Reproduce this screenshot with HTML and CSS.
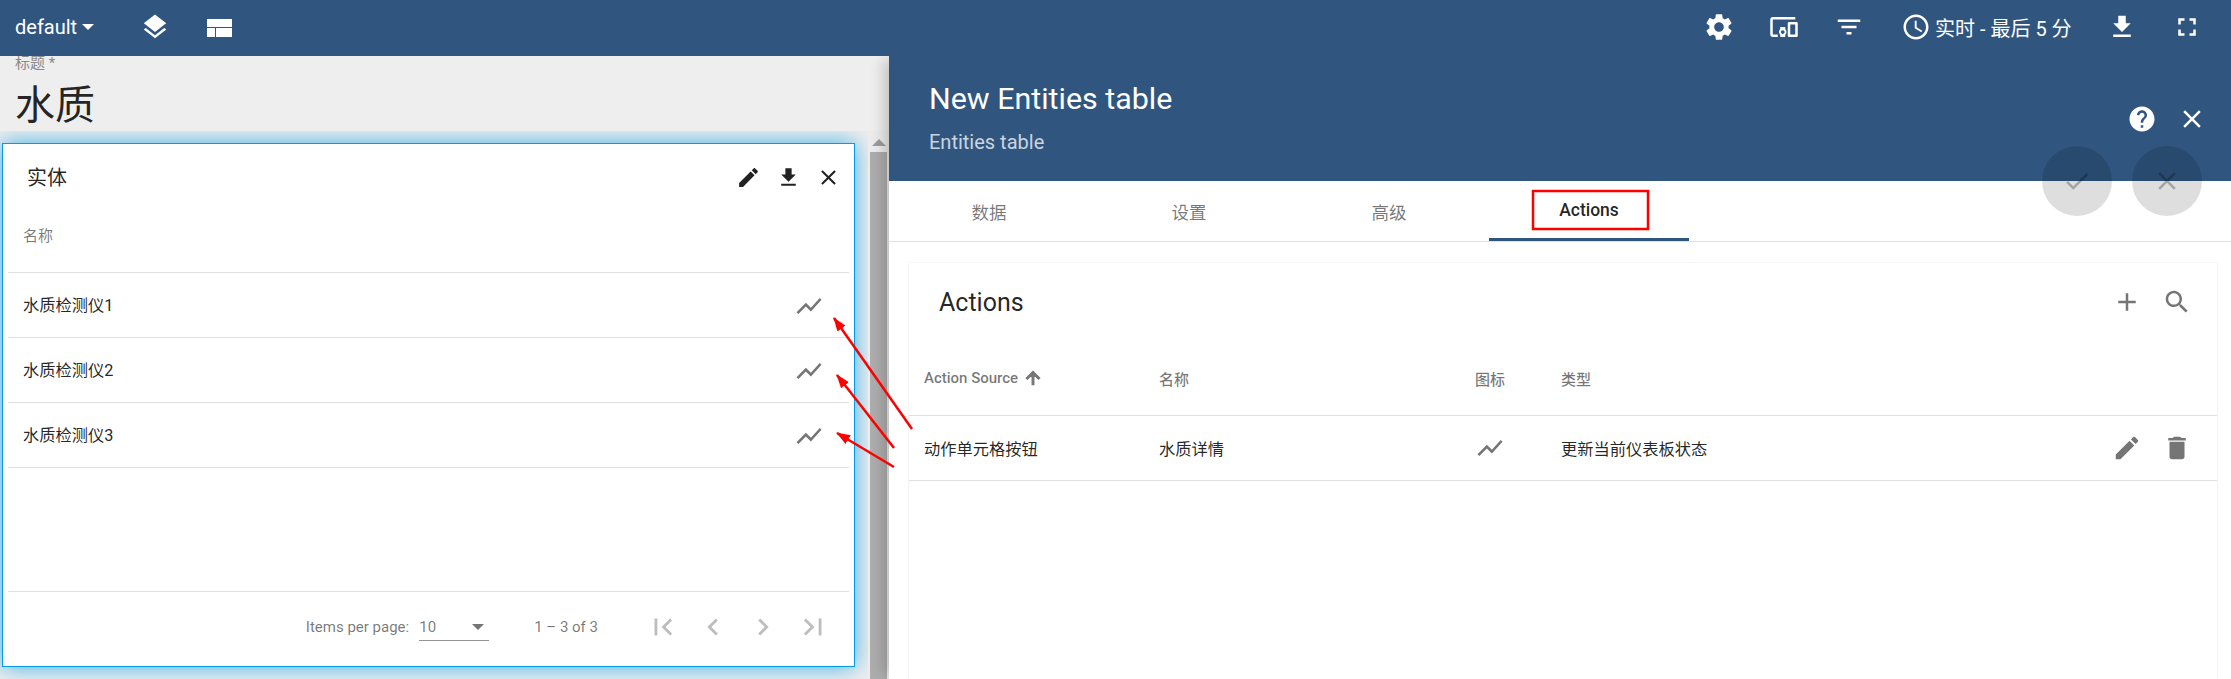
FILE: index.html

```html
<!DOCTYPE html>
<html lang="en">
<head>
  <meta charset="UTF-8" />
  <meta name="viewport" content="width=device-width, initial-scale=1.0" />
  <title>New Entities table</title>
  <link rel="stylesheet" href="styles.css">
</head>
<body>
  <svg class="sprite" aria-hidden="true">
    <symbol id="i-edit" viewBox="0 0 24 24"><path d="M3 17.25V21h3.75L17.81 9.94l-3.75-3.75L3 17.25zM20.71 7.04c.39-.39.39-1.02 0-1.41l-2.34-2.34c-.39-.39-1.02-.39-1.41 0l-1.83 1.83 3.75 3.75 1.83-1.83z"/></symbol>
    <symbol id="i-download" viewBox="0 0 24 24"><path d="M19 9h-4V3H9v6H5l7 7 7-7zM5 18v2h14v-2H5z"/></symbol>
    <symbol id="i-close" viewBox="0 0 24 24"><path d="M19 6.41L17.59 5 12 10.59 6.41 5 5 6.41 10.59 12 5 17.59 6.41 19 12 13.41 17.59 19 19 17.59 13.41 12z"/></symbol>
    <symbol id="i-chart" viewBox="0 0 24 24"><path d="M3.5 18.49l6-6.01 4 4L22 6.92l-1.41-1.41-7.09 7.97-4-4L2 16.99z"/></symbol>
    <symbol id="i-gear" viewBox="0 0 24 24"><path d="M19.14 12.94c.04-.3.06-.61.06-.94 0-.32-.02-.64-.07-.94l2.03-1.58c.18-.14.23-.41.12-.61l-1.92-3.32c-.12-.22-.37-.29-.59-.22l-2.39.96c-.5-.38-1.03-.7-1.62-.94l-.36-2.54c-.04-.24-.24-.41-.48-.41h-3.84c-.24 0-.43.17-.47.41l-.36 2.54c-.59.24-1.13.57-1.62.94l-2.39-.96c-.22-.08-.47 0-.59.22L2.74 8.87c-.12.21-.08.47.12.61l2.03 1.58c-.05.3-.09.63-.09.94s.02.64.07.94l-2.03 1.58c-.18.14-.23.41-.12.61l1.92 3.32c.12.22.37.29.59.22l2.39-.96c.5.38 1.03.7 1.62.94l.36 2.54c.05.24.24.41.48.41h3.84c.24 0 .44-.17.47-.41l.36-2.54c.59-.24 1.13-.56 1.62-.94l2.39.96c.22.08.47 0 .59-.22l1.92-3.32c.12-.22.07-.47-.12-.61l-2.01-1.58zM12 15.6c-1.98 0-3.6-1.62-3.6-3.6s1.62-3.6 3.6-3.6 3.6 1.62 3.6 3.6-1.62 3.6-3.6 3.6z"/></symbol>
    <symbol id="i-devices" viewBox="0 0 24 24"><path d="M3 6h18V4H3c-1.1 0-2 .9-2 2v12c0 1.1.9 2 2 2h4v-2H3V6zm10 6H9v1.78c-.61.55-1 1.33-1 2.22s.39 1.67 1 2.22V20h4v-1.78c.61-.55 1-1.34 1-2.22s-.39-1.67-1-2.22V12zm-2 5.5c-.83 0-1.5-.67-1.5-1.5s.67-1.5 1.5-1.5 1.5.67 1.5 1.5-.67 1.5-1.5 1.5zM22 8h-6c-.5 0-1 .5-1 1v10c0 .5.5 1 1 1h6c.5 0 1-.5 1-1V9c0-.5-.5-1-1-1zm-1 10h-4v-8h4v8z"/></symbol>
    <symbol id="i-filter" viewBox="0 0 24 24"><path d="M10 18h4v-2h-4v2zM3 6v2h18V6H3zm3 7h12v-2H6v2z"/></symbol>
    <symbol id="i-clock" viewBox="0 0 24 24"><path d="M11.99 2C6.47 2 2 6.48 2 12s4.47 10 9.99 10C17.52 22 22 17.52 22 12S17.52 2 11.99 2zM12 20c-4.42 0-8-3.58-8-8s3.58-8 8-8 8 3.58 8 8-3.58 8-8 8zm.5-13H11v6l5.25 3.15.75-1.23-4.5-2.67z"/></symbol>
    <symbol id="i-fullscreen" viewBox="0 0 24 24"><path d="M7 14H5v5h5v-2H7v-3zm-2-4h2V7h3V5H5v5zm12 7h-3v2h5v-5h-2v3zM14 5v2h3v3h2V5h-5z"/></symbol>
    <symbol id="i-layers" viewBox="0 0 24 24"><path d="M11.99 18.54l-7.37-5.73L3 14.07l9 7 9-7-1.63-1.27-7.38 5.74zM12 16l7.36-5.73L21 9l-9-7-9 7 1.63 1.27L12 16z"/></symbol>
    <symbol id="i-layout" viewBox="0 0 25 18"><path d="M0 0h25v8H0zM0 9h8v9H0zM9 9h16v9H9z"/></symbol>
    <symbol id="i-help" viewBox="0 0 24 24"><path d="M12 2C6.48 2 2 6.48 2 12s4.48 10 10 10 10-4.48 10-10S17.52 2 12 2zm1 17h-2v-2h2v2zm2.07-7.75l-.9.92C13.45 12.9 13 13.5 13 15h-2v-.5c0-1.1.45-2.1 1.17-2.83l1.24-1.26c.37-.36.59-.86.59-1.41 0-1.1-.9-2-2-2s-2 .9-2 2H8c0-2.21 1.79-4 4-4s4 1.79 4 4c0 .88-.36 1.68-.93 2.25z"/></symbol>
    <symbol id="i-check" viewBox="0 0 24 24"><path d="M9 16.2L4.8 12l-1.4 1.4L9 19 21 7l-1.4-1.4L9 16.2z"/></symbol>
    <symbol id="i-add" viewBox="0 0 24 24"><path d="M19 13h-6v6h-2v-6H5v-2h6V5h2v6h6v2z"/></symbol>
    <symbol id="i-search" viewBox="0 0 24 24"><path d="M15.5 14h-.79l-.28-.27C15.41 12.59 16 11.11 16 9.5 16 5.91 13.09 3 9.5 3S3 5.91 3 9.5 5.91 16 9.5 16c1.61 0 3.09-.59 4.23-1.57l.27.28v.79l5 4.99L20.49 19l-4.99-5zm-6 0C7.01 14 5 11.99 5 9.5S7.01 5 9.5 5 14 7.01 14 9.5 11.99 14 9.5 14z"/></symbol>
    <symbol id="i-delete" viewBox="0 0 24 24"><path d="M6 19c0 1.1.9 2 2 2h8c1.1 0 2-.9 2-2V7H6v12zM19 4h-3.5l-1-1h-5l-1 1H5v2h14V4z"/></symbol>
    <symbol id="i-up" viewBox="0 0 24 24"><path d="M4 12l1.41 1.41L11 7.83V20h2V7.83l5.58 5.59L20 12l-8-8-8 8z"/></symbol>
    <symbol id="i-first" viewBox="0 0 24 24"><path d="M18.41 16.59L13.82 12l4.59-4.59L17 6l-6 6 6 6zM6 6h2v12H6z"/></symbol>
    <symbol id="i-prev" viewBox="0 0 24 24"><path d="M15.41 7.41L14 6l-6 6 6 6 1.41-1.41L10.83 12z"/></symbol>
    <symbol id="i-next" viewBox="0 0 24 24"><path d="M10 6L8.59 7.41 13.17 12l-4.58 4.59L10 18l6-6z"/></symbol>
    <symbol id="i-last" viewBox="0 0 24 24"><path d="M5.59 7.41L10.18 12l-4.59 4.59L7 18l6-6-6-6zM16 6h2v12h-2z"/></symbol>
  </svg>

  <header class="toolbar">
    <div class="state">default<span class="caret"></span></div>
    <div class="tool"><svg class="icon"><use href="#i-layers"/></svg></div>
    <div class="tool"><svg class="layout-icon"><use href="#i-layout"/></svg></div>
    <div class="toolbar-right">
      <div class="tool"><svg class="icon gear"><use href="#i-gear"/></svg></div>
      <div class="tool"><svg class="icon"><use href="#i-devices"/></svg></div>
      <div class="tool"><svg class="icon"><use href="#i-filter"/></svg></div>
      <div class="timewindow"><svg class="icon"><use href="#i-clock"/></svg><span>实时 - 最后 5 分</span></div>
      <div class="tool"><svg class="icon"><use href="#i-download"/></svg></div>
      <div class="tool"><svg class="icon"><use href="#i-fullscreen"/></svg></div>
    </div>
  </header>

  <div class="main">
    <section class="dashboard">
      <div class="dash-title">
        <div class="dash-label">标题 *</div>
        <div class="dash-name">水质</div>
      </div>
      <div class="dash-body">
        <div class="canvas">
          <div class="widget">
            <div class="widget-head">
              <span class="widget-title">实体</span>
              <div class="widget-tools">
                <svg class="icon-sm"><use href="#i-edit"/></svg>
                <svg class="icon-sm"><use href="#i-download"/></svg>
                <svg class="icon-sm"><use href="#i-close"/></svg>
              </div>
            </div>
            <div class="widget-thead">名称</div>
            <div class="widget-row"><span>水质检测仪1</span><svg class="icon grey"><use href="#i-chart"/></svg></div>
            <div class="widget-row"><span>水质检测仪2</span><svg class="icon grey"><use href="#i-chart"/></svg></div>
            <div class="widget-row"><span>水质检测仪3</span><svg class="icon grey"><use href="#i-chart"/></svg></div>
            <div class="widget-fill"></div>
            <div class="paginator">
              <span class="page-label">Items per page:</span>
              <div class="page-select"><span>10</span><span class="page-caret"></span></div>
              <span class="page-range">1 – 3 of 3</span>
              <div class="page-btn"><svg class="icon-page"><use href="#i-first"/></svg></div>
              <div class="page-btn"><svg class="icon-page"><use href="#i-prev"/></svg></div>
              <div class="page-btn"><svg class="icon-page"><use href="#i-next"/></svg></div>
              <div class="page-btn"><svg class="icon-page"><use href="#i-last"/></svg></div>
            </div>
          </div>
        </div>
        <div class="scrollbar">
          <div class="scroll-up"></div>
          <div class="scroll-thumb"></div>
        </div>
      </div>
    </section>

    <section class="panel">
      <div class="panel-head">
        <div class="panel-titles">
          <div class="panel-title">New Entities table</div>
          <div class="panel-sub">Entities table</div>
        </div>
        <div class="panel-tools">
          <div class="panel-tool"><svg class="icon"><use href="#i-help"/></svg></div>
          <div class="panel-tool"><svg class="icon"><use href="#i-close"/></svg></div>
        </div>
      </div>

      <div class="fabs">
        <div class="fab"><svg class="icon"><use href="#i-check"/></svg></div>
        <div class="fab"><svg class="icon"><use href="#i-close"/></svg></div>
      </div>

      <nav class="tabs">
        <div class="tab">数据</div>
        <div class="tab">设置</div>
        <div class="tab">高级</div>
        <div class="tab active">Actions</div>
      </nav>

      <div class="card">
        <div class="card-head">
          <span class="card-title">Actions</span>
          <div class="card-tools">
            <div class="card-tool"><svg class="icon grey"><use href="#i-add"/></svg></div>
            <div class="card-tool"><svg class="icon grey"><use href="#i-search"/></svg></div>
          </div>
        </div>
        <div class="grid-row grid-head">
          <div class="cell">Action Source <svg class="sort-icon"><use href="#i-up"/></svg></div>
          <div class="cell">名称</div>
          <div class="cell">图标</div>
          <div class="cell">类型</div>
          <div></div>
        </div>
        <div class="grid-row grid-body">
          <div class="cell">动作单元格按钮</div>
          <div class="cell">水质详情</div>
          <div class="cell"><svg class="icon grey"><use href="#i-chart"/></svg></div>
          <div class="cell">更新当前仪表板状态</div>
          <div class="card-tools">
            <div class="card-tool"><svg class="icon grey"><use href="#i-edit"/></svg></div>
            <div class="card-tool"><svg class="icon grey"><use href="#i-delete"/></svg></div>
          </div>
        </div>
      </div>
    </section>
  </div>

  <svg class="notes" viewBox="0 0 2231 679">
    <defs>
      <marker id="head" markerUnits="userSpaceOnUse" markerWidth="14" markerHeight="12" refX="13" refY="5" orient="auto">
        <path d="M0 0L14 5L0 10z" fill="#f00"/>
      </marker>
    </defs>
    <rect x="1533" y="191" width="115" height="38" class="note-line"/>
    <line x1="912" y1="429" x2="834" y2="318" class="note-line" marker-end="url(#head)"/>
    <line x1="894" y1="448" x2="837" y2="375" class="note-line" marker-end="url(#head)"/>
    <line x1="894" y1="467" x2="837" y2="433" class="note-line" marker-end="url(#head)"/>
  </svg>
</body>
</html>
```

FILE: styles.css

```css
* {
  box-sizing: border-box;
}
html, body {
  height: 100%;
}
body {
  margin: 0;
  display: flex;
  flex-direction: column;
  overflow: hidden;
  position: relative;
  background: #fff;
  color: rgba(0, 0, 0, 0.87);
  font-family: Roboto, "Noto Sans CJK SC", sans-serif;
}
svg {
  fill: currentColor;
  display: block;
}
.sprite {
  display: none;
}
.icon {
  width: 30px;
  height: 30px;
}
.icon.gear {
  width: 32px;
  height: 32px;
}
.icon.grey {
  color: #757575;
}
.icon-sm {
  width: 25px;
  height: 25px;
}

/* top bar */
.toolbar {
  height: 56px;
  flex: none;
  display: flex;
  align-items: center;
  background: #305680;
  color: #fff;
  padding: 0 12px 2px 15px;
  position: relative;
  z-index: 3;
}
.state {
  width: 107px;
  font-size: 20px;
  display: flex;
  align-items: center;
}
.caret {
  margin-left: 5px;
  border-left: 6px solid transparent;
  border-right: 6px solid transparent;
  border-top: 6px solid #fff;
}
.tool {
  width: 65px;
  display: flex;
  justify-content: center;
}
.layout-icon {
  width: 25px;
  height: 18px;
  margin-top: 2px;
}
.toolbar-right {
  margin-left: auto;
  display: flex;
  align-items: center;
}
.timewindow {
  width: 208px;
  padding-left: 20px;
  display: flex;
  align-items: center;
  gap: 4px;
  font-size: 20px;
}

/* layout */
.main {
  flex: 1;
  display: flex;
  min-height: 0;
}
.dashboard {
  width: 889px;
  display: flex;
  flex-direction: column;
  background: #eee;
}
.dash-title {
  height: 75px;
  padding-left: 15px;
  flex: none;
}
.dash-label {
  font-size: 15px;
  line-height: 14px;
  color: #8a8a8a;
}
.dash-name {
  font-size: 40px;
  line-height: 50px;
  margin-top: 11px;
}
.dash-body {
  flex: 1;
  display: flex;
  min-height: 0;
}
.canvas {
  width: 868px;
  padding: 12px 13px 0 2px;
  overflow: hidden;
}
.scrollbar {
  width: 21px;
  padding: 8px 2px 0 2px;
  background: #ececec;
}
.scroll-up {
  width: 0;
  margin: 0 auto 6px;
  border-left: 7px solid transparent;
  border-right: 7px solid transparent;
  border-bottom: 7px solid #9c9c9c;
}
.scroll-thumb {
  height: 540px;
  background: #adadad;
}

/* widget */
.widget {
  height: 524px;
  display: flex;
  flex-direction: column;
  background: #fff;
  border: 1px solid #039be5;
  box-shadow: 0 0 22px rgba(3, 155, 229, 0.75);
  padding: 0 5px;
}
.widget-head {
  height: 66px;
  flex: none;
  display: flex;
  align-items: center;
  justify-content: space-between;
  padding: 0 1px 0 19px;
}
.widget-title {
  font-size: 20px;
  margin-top: -2px;
}
.widget-tools {
  display: flex;
}
.widget-tools svg {
  margin: 0 7.5px;
}
.widget-thead {
  height: 63px;
  flex: none;
  padding: 15px 0 0 15px;
  font-size: 15px;
  line-height: 22px;
  color: rgba(0, 0, 0, 0.54);
  border-bottom: 1px solid #e0e0e0;
}
.widget-row {
  height: 65px;
  flex: none;
  display: flex;
  align-items: center;
  justify-content: space-between;
  padding: 0 25px 2px 15px;
  font-size: 16.25px;
  border-bottom: 1px solid #e0e0e0;
}
.widget-row svg {
  margin-top: 4px;
}
.widget-fill {
  flex: 1;
}
.paginator {
  height: 75px;
  flex: none;
  display: flex;
  align-items: center;
  justify-content: flex-end;
  padding: 0 11px 4px 0;
  border-top: 1px solid #e0e0e0;
  font-size: 15px;
  color: rgba(0, 0, 0, 0.54);
}
.page-select {
  width: 70px;
  height: 28px;
  margin: 0 45px 0 10px;
  display: flex;
  align-items: center;
  justify-content: space-between;
  padding: 0 5px 0 0;
  border-bottom: 1px solid #949494;
}
.page-caret {
  border-left: 6px solid transparent;
  border-right: 6px solid transparent;
  border-top: 6px solid #757575;
}
.page-range {
  margin-right: 40px;
}
.page-btn {
  width: 50px;
  display: flex;
  justify-content: center;
  color: #bdbdbd;
}
.icon-page {
  width: 34px;
  height: 34px;
}

/* side panel */
.panel {
  flex: 1;
  display: flex;
  flex-direction: column;
  min-width: 0;
  position: relative;
  z-index: 2;
  background: #fff;
  box-shadow: -8px 0 14px -4px rgba(0, 0, 0, 0.22);
}
.panel-head {
  height: 125px;
  flex: none;
  display: flex;
  justify-content: space-between;
  background: #305680;
  color: #fff;
  padding: 25px 14px 0 40px;
}
.panel-title {
  font-size: 30.4px;
  line-height: 36px;
}
.panel-sub {
  font-size: 20px;
  line-height: 22px;
  margin-top: 14px;
  color: rgba(255, 255, 255, 0.75);
}
.panel-tools {
  display: flex;
  margin-top: 23px;
}
.panel-tool {
  width: 50px;
  display: flex;
  justify-content: center;
}
.fabs {
  position: absolute;
  top: 90px;
  right: 29px;
  display: flex;
  gap: 20px;
}
.fab {
  width: 70px;
  height: 70px;
  border-radius: 50%;
  display: flex;
  align-items: center;
  justify-content: center;
  background: rgba(0, 0, 0, 0.13);
  color: rgba(0, 0, 0, 0.26);
}
.tabs {
  height: 61px;
  flex: none;
  display: flex;
  border-bottom: 1px solid #e0e0e0;
}
.tab {
  width: 200px;
  display: flex;
  align-items: center;
  justify-content: center;
  padding-top: 1px;
  font-size: 17.5px;
  color: rgba(0, 0, 0, 0.54);
}
.tab.active {
  font-weight: 500;
  color: rgba(0, 0, 0, 0.87);
  border-bottom: 3px solid #305680;
}

/* actions card */
.card {
  flex: 1;
  margin: 21px 14px 0 20px;
  background: #fff;
  box-shadow: 0 0 2px rgba(0, 0, 0, 0.13);
}
.card-head {
  height: 78px;
  display: flex;
  align-items: center;
  justify-content: space-between;
  padding: 0 15px 0 30px;
}
.card-title {
  font-size: 25px;
}
.card-tools {
  display: flex;
}
.card-tool {
  width: 50px;
  display: flex;
  justify-content: center;
}
.grid-row {
  display: grid;
  grid-template-columns: 235px 316px 86px 1fr 115px;
  align-items: center;
  border-bottom: 1px solid #e0e0e0;
}
.grid-head {
  height: 75px;
  font-size: 15px;
  font-weight: 500;
  color: rgba(0, 0, 0, 0.54);
}
.grid-body {
  height: 65px;
  font-size: 16.25px;
}
.cell {
  padding-left: 15px;
  display: flex;
  align-items: center;
  gap: 4px;
}
.sort-icon {
  width: 20px;
  height: 20px;
  margin-left: 1px;
  color: #757575;
  stroke: #757575;
  stroke-width: 1.5;
}

/* red notes drawn over the screenshot */
.notes {
  position: absolute;
  top: 0;
  left: 0;
  width: 2231px;
  height: 679px;
  z-index: 5;
  pointer-events: none;
}
.note-line {
  fill: none;
  stroke: #f00;
  stroke-width: 2.5;
}
```
